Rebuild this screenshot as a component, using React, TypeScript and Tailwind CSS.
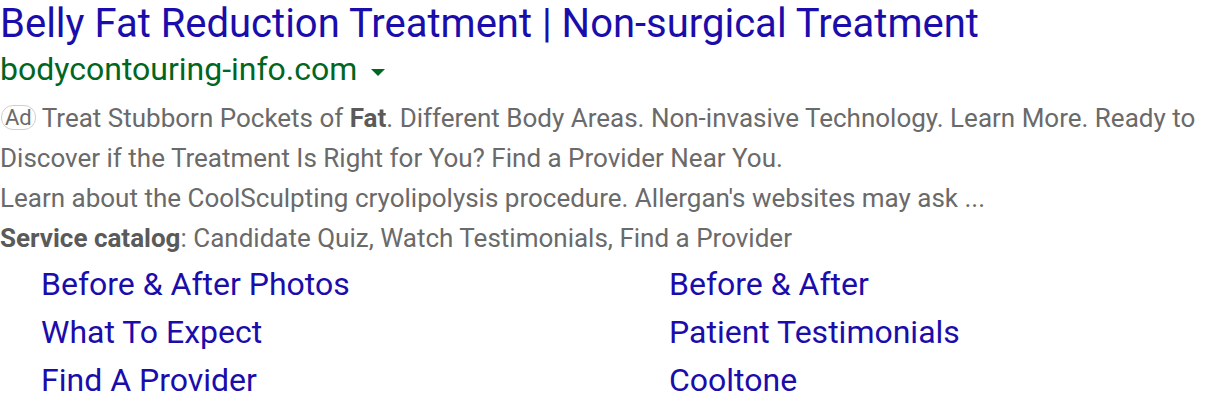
import React from "react";

const sitelinks = [
  ["Before & After Photos", "Before & After"],
  ["What To Expect", "Patient Testimonials"],
  ["Find A Provider", "Cooltone"],
];

export default function App() {
  return (
    <div className="w-[1216px] h-[410px] overflow-hidden bg-white font-['Roboto',sans-serif]">
      <a className="block text-[40px] leading-[48px] text-[#1a0dab] whitespace-nowrap">
        Belly Fat Reduction Treatment | Non-surgical Treatment
      </a>
      <div className="flex items-center text-[32px] leading-[42px] text-[#006621]">
        <span>bodycontouring-info.com</span>
        <span className="ml-[14px] mt-[6px] h-0 w-0 border-x-[7px] border-t-[7px] border-x-transparent border-t-[#006621]" />
      </div>
      <div className="mt-[8px] text-[26px] leading-[40px] text-[#6a6a6a]">
        <p>
          <span className="mr-[6px] ml-[1px] inline-block rounded-[12px] border border-[#cfcfcf] px-[3px] text-[22px] leading-[23px] align-[2px]">
            Ad
          </span>
          Treat Stubborn Pockets of <b className="text-[#5a5a5a]">Fat</b>. Different Body Areas. Non-invasive Technology. Learn More. Ready to Discover if the Treatment Is Right for You? Find a Provider Near You.
        </p>
        <p>Learn about the CoolSculpting cryolipolysis procedure. Allergan's websites may ask ...</p>
        <p>
          <b className="text-[#5a5a5a]">Service catalog</b>: Candidate Quiz, Watch Testimonials, Find a Provider
        </p>
      </div>
      <div className="mt-[2px] pl-[41px]">
        {sitelinks.map(([a, b]) => (
          <div key={a} className="grid grid-cols-[628px_1fr] text-[32px] leading-[48px] text-[#1a0dab]">
            <a>{a}</a>
            <a>{b}</a>
          </div>
        ))}
      </div>
    </div>
  );
}
